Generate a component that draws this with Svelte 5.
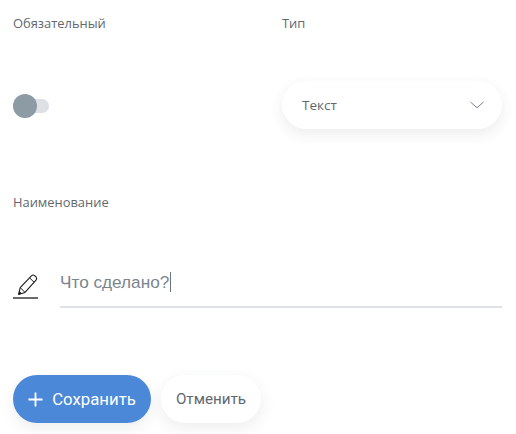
<script lang="ts">
  let required = $state(false);
  let title = $state("");
</script>

<div class="form">
  <div class="row top">
    <div class="col required">
      <span class="label">Обязательный</span>
      <div class="switch-box">
        <button class="switch" aria-label="Обязательный" onclick={() => (required = !required)}>
          <span class="knob"></span>
        </button>
      </div>
    </div>
    <div class="col type">
      <span class="label">Тип</span>
      <div class="select">
        <span>Текст</span>
        <svg width="14" height="8" viewBox="0 0 14 8" fill="none">
          <path d="M0.5 1 L7 6.8 L13.5 1" stroke="#6b747c" stroke-width="0.9" />
        </svg>
      </div>
    </div>
  </div>

  <span class="label name-label">Наименование</span>

  <div class="name-row">
    <svg class="pencil" width="26" height="30" viewBox="0 0 26 30" fill="none">
      <path d="M5.6 25.4 L7.2 18.6 L18.4 6.8 Q20 5.4 21.6 6.6 L23.2 8.2 Q24.2 9.8 23 11.2 L12 23.4 Z" stroke="#1b1b1b" stroke-width="1.1" stroke-linejoin="round" />
      <path d="M16.6 8.8 L21 13.2 M7.2 18.6 L12 23.4" stroke="#1b1b1b" stroke-width="1" />
      <path d="M5.6 25.4 L6.4 22 L9 24.4 Z" fill="#1b1b1b" />
      <path d="M0 29 H25" stroke="#1b1b1b" stroke-width="1.3" />
    </svg>
    <div class="field">
      <input placeholder="Что сделано?" bind:value={title} />
      <i class="caret"></i>
    </div>
  </div>

  <div class="actions">
    <button class="btn save">
      <svg width="15" height="15" viewBox="0 0 15 15">
        <path d="M7.5 0.5 V14.5 M0.5 7.5 H14.5" stroke="#fff" stroke-width="1.8" />
      </svg>
      Сохранить
    </button>
    <button class="btn cancel">Отменить</button>
  </div>
</div>

<style>
  :global(body) {
    background: #fff;
  }

  .form {
    width: 516px;
    height: 434px;
    box-sizing: border-box;
    padding: 15px 14px 0 13px;
    font-family: "Open Sans", "Noto Sans", sans-serif;
    overflow: hidden;
  }

  .row {
    display: flex;
  }

  .required {
    width: 269px;
  }

  .type {
    flex: 1;
  }

  .label {
    display: block;
    font-size: 12.9px;
    line-height: 16px;
    color: #5f6870;
  }

  .switch-box {
    height: 24px;
    margin-top: 63px;
    display: flex;
    align-items: center;
  }

  .switch {
    position: relative;
    width: 36px;
    height: 14px;
    padding: 0;
    border: none;
    border-radius: 7px;
    background: #dde0e5;
  }

  .knob {
    position: absolute;
    left: 0;
    top: -5px;
    width: 24px;
    height: 24px;
    border-radius: 50%;
    background: #8d9ba5;
  }

  .select {
    margin-top: 50px;
    height: 48px;
    box-sizing: border-box;
    padding: 0 18px 0 20px;
    display: flex;
    align-items: center;
    justify-content: space-between;
    border-radius: 24px;
    background: #fff;
    box-shadow: 0 5px 14px rgba(40, 50, 70, 0.09);
    font-size: 13.5px;
    color: #5f6870;
  }

  .name-label {
    margin-top: 65px;
  }

  .name-row {
    display: flex;
    margin-top: 59px;
    align-items: flex-start;
    gap: 21px;
  }

  .pencil {
    flex: none;
  }

  .field {
    position: relative;
    flex: 1;
    border-bottom: 2px solid #dfe2e6;
    height: 37px;
  }

  input {
    width: 100%;
    height: 26px;
    padding: 0;
    border: none;
    outline: none;
    background: transparent;
    font-family: "Liberation Sans", Arial, sans-serif;
    font-size: 17.2px;
    color: #333;
  }

  input::placeholder {
    color: #7b858e;
    opacity: 1;
  }

  .caret {
    position: absolute;
    left: 110px;
    top: 3px;
    width: 1px;
    height: 20px;
    background: #6b747c;
  }

  .actions {
    display: flex;
    gap: 10px;
    margin-top: 67px;
  }

  .btn {
    height: 48px;
    border: none;
    border-radius: 24px;
    font-family: Roboto, sans-serif;
    font-size: 15.2px;
  }

  .save {
    width: 138px;
    display: flex;
    align-items: center;
    justify-content: center;
    gap: 9px;
    background: #4c88d8;
    color: #fff;
    font-size: 16.8px;
    box-shadow: 0 6px 14px rgba(40, 50, 70, 0.08);
  }

  .cancel {
    width: 100px;
    background: #fff;
    color: #5f6870;
    box-shadow: 0 5px 16px rgba(40, 50, 70, 0.09);
  }
</style>
